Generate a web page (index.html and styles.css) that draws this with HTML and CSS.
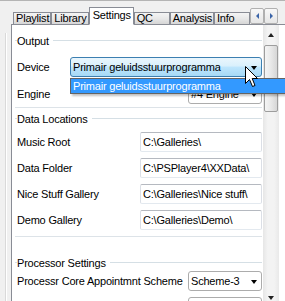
FILE: index.html
```html
<!DOCTYPE html>
<html lang="en">
<head>
    <meta charset="UTF-8">
    <title>Settings</title>
    <link rel="stylesheet" href="styles.css">
</head>
<body>
    <div class="window">
        <div class="tabbar">
            <div class="tab">Playlist</div>
            <div class="tab">Library</div>
            <div class="tab active">Settings</div>
            <div class="tab">QC</div>
            <div class="tab">Analysis</div>
            <div class="tab">Info</div>
            <div class="tab-scroll">
                <div class="tab-arrow"><span class="tri-left"></span></div>
                <div class="tab-arrow"><span class="tri-right"></span></div>
            </div>
        </div>

        <div class="pane-row">
            <div class="side"><div class="side-line"></div></div>
            <div class="panel">
                <div class="scroll-area">
                    <div class="content">
                        <div class="group-title output-title">Output</div>
                        <div class="row device-row">
                            <label>Device</label>
                            <div class="combo wide focused">Primair geluidsstuurprogramma</div>
                        </div>
                        <div class="row engine-row">
                            <label>Engine</label>
                            <div class="combo">#4 Engine</div>
                        </div>
                        <div class="sep first-sep"></div>

                        <div class="group-title data-title">Data Locations</div>
                        <div class="row">
                            <label>Music Root</label>
                            <input class="field" type="text" value="C:\Galleries\">
                        </div>
                        <div class="row">
                            <label>Data Folder</label>
                            <input class="field" type="text" value="C:\PSPlayer4\XXData\">
                        </div>
                        <div class="row">
                            <label>Nice Stuff Gallery</label>
                            <input class="field" type="text" value="C:\Galleries\Nice stuff\">
                        </div>
                        <div class="row">
                            <label>Demo Gallery</label>
                            <input class="field" type="text" value="C:\Galleries\Demo\">
                        </div>
                        <div class="sep"></div>

                        <div class="group-title proc-title">Processor Settings</div>
                        <div class="row scheme-row">
                            <label>Processr Core Appointmnt Scheme</label>
                            <div class="combo">Scheme-3</div>
                        </div>
                        <div class="row">
                            <label>Phase Primer (msec)</label>
                            <div class="combo">1</div>
                        </div>
                    </div>
                    <div class="vscroll">
                        <div class="sb-btn"><span class="tri-up"></span></div>
                        <div class="thumb"><span class="grip"></span></div>
                        <div class="track"></div>
                        <div class="sb-btn"><span class="tri-down"></span></div>
                    </div>
                </div>
            </div>
        </div>

        <div class="popup">Primair geluidsstuurprogramma</div>

        <svg class="cursor" width="14" height="22" viewBox="0 0 14 22">
            <path d="M0.5 0.5 L0.5 17.5 L4.5 13.5 L7.5 20.5 L10 19.5 L7.2 12.5 L12.5 12.5 Z" fill="#fff" stroke="#000" stroke-width="1" stroke-linejoin="miter"/>
        </svg>
    </div>
</body>
</html>
```

FILE: styles.css
```css
body {
    margin: 0;
    font-family: "Liberation Sans", Arial, sans-serif;
    font-size: 11px;
    letter-spacing: -0.2px;
    color: #000;
    background: #f0f0f0;
    overflow: hidden;
}
.window {
    position: relative;
    height: 301px;
    box-sizing: border-box;
    border-top: 1px solid #b4b4b4;
    overflow: hidden;
}

/* tabs */
.tabbar {
    display: flex;
    align-items: flex-end;
    height: 24px;
    padding-left: 13px;
    margin-bottom: -1px;
}
.tab {
    position: relative;
    z-index: 1;
    box-sizing: border-box;
    height: 13px;
    min-width: 36px;
    padding: 0 2px;
    line-height: 11px;
    border: 1px solid #898c95;
    background: linear-gradient(#f4f4f4, #e8e8e8 50%, #d6d6d6);
    white-space: nowrap;
}
.tab.active {
    height: 18px;
    padding: 2px 3px 0;
    background: #fff;
    border-bottom-color: #fff;
}
.tab-scroll {
    display: flex;
    align-self: flex-start;
    margin: 7px 7px 0 auto;
}
.tab-arrow {
    box-sizing: border-box;
    width: 14px;
    height: 16px;
    border: 1px solid #b0b0b0;
    border-radius: 2px;
    background: linear-gradient(#f8f8f8, #e6e6e6);
    display: flex;
    align-items: center;
    justify-content: center;
}
.tri-left {
    border-top: 3px solid transparent;
    border-bottom: 3px solid transparent;
    border-right: 3px solid #3b64a8;
}
.tri-right {
    border-top: 3px solid transparent;
    border-bottom: 3px solid transparent;
    border-left: 3px solid #3b64a8;
}

/* panel */
.pane-row {
    display: flex;
}
.side {
    width: 11px;
    flex: none;
}
.side-line {
    width: 0;
    height: 280px;
    margin: 9px 0 0 5px;
    border-left: 1px solid #d9d9d9;
    border-right: 1px solid #fff;
}
.panel {
    flex: none;
    width: 290px;
    border: 1px solid #898c95;
    background: #fff;
}
.scroll-area {
    display: flex;
    height: 283px;
    overflow: hidden;
}
.content {
    box-sizing: border-box;
    width: 251px;
    flex: none;
    padding-right: 1px;
}

.group-title {
    display: flex;
    align-items: center;
    height: 13px;
    line-height: 13px;
    padding-left: 3px;
    white-space: nowrap;
}
.group-title::before {
    content: "";
    width: 2px;
    height: 1px;
    margin-top: -2px;
    background: #d5dfe5;
}
.group-title::after {
    content: "";
    flex: 1;
    height: 1px;
    margin: -2px 0 0 4px;
    background: #d5dfe5;
}
.output-title { margin-top: 10px; }
.data-title { margin-top: 5px; }
.proc-title { margin-top: 20px; }

.sep {
    height: 1px;
    margin: 6px 0 0 3px;
    background: #dde3e8;
}
.first-sep { margin-top: 3px; }

.row {
    display: flex;
    align-items: center;
    height: 20px;
    margin-top: 6px;
}
.device-row { margin-top: 9px; }
.engine-row { margin-top: 7px; }
.scheme-row { margin-top: 1px; }
.row label {
    padding-left: 5px;
    white-space: nowrap;
}

.combo {
    box-sizing: border-box;
    width: 74px;
    height: 20px;
    margin-left: auto;
    padding-left: 2px;
    display: flex;
    align-items: center;
    border: 1px solid #acacac;
    border-radius: 3px;
    background: #fff;
    white-space: nowrap;
}
.combo::after {
    content: "";
    margin: 1px 4px 0 auto;
    border-left: 3.5px solid transparent;
    border-right: 3.5px solid transparent;
    border-top: 4px solid #000;
}
.combo.wide {
    width: 192px;
}
.combo.focused {
    border-color: #3c7fb1;
    background: linear-gradient(#eaf6fd, #d9f0fc 45%, #bee6fd 50%, #a7d9f5);
}
.field {
    box-sizing: border-box;
    width: 122px;
    height: 20px;
    margin: 0 0 0 auto;
    padding: 0 0 0 2px;
    font: inherit;
    letter-spacing: inherit;
    color: #000;
    border: 1px solid;
    border-color: #b5b9c0 #dbdfe6 #e3e9ef #dbdfe6;
    border-radius: 2px;
    background: #fff;
    outline: none;
}

/* scrollbar */
.vscroll {
    box-sizing: border-box;
    width: 16px;
    flex: none;
    display: flex;
    flex-direction: column;
    background: linear-gradient(to right, #e6e6e6, #f3f3f3 30%, #f3f3f3 70%, #e9e9e9);
}
.sb-btn {
    height: 20px;
    flex: none;
    display: flex;
    align-items: center;
    justify-content: center;
}
.tri-up {
    border-left: 3.5px solid transparent;
    border-right: 3.5px solid transparent;
    border-bottom: 4px solid #222;
}
.tri-down {
    border-left: 3.5px solid transparent;
    border-right: 3.5px solid transparent;
    border-top: 4px solid #222;
}
.thumb {
    box-sizing: border-box;
    height: 67px;
    margin: 0 1px;
    flex: none;
    display: flex;
    align-items: center;
    justify-content: center;
    border: 1px solid #9d9d9d;
    border-radius: 2px;
    background: linear-gradient(to right, #f5f5f5, #e8e8e8 50%, #d6d6d6);
}
.grip {
    width: 7px;
    height: 1px;
    background: #707070;
}
.track {
    flex: 1;
}

/* open dropdown */
.popup {
    position: absolute;
    left: 70px;
    top: 77px;
    width: 222px;
    height: 16px;
    box-sizing: border-box;
    padding-left: 2px;
    line-height: 14px;
    color: #fff;
    background: #3399ff;
    border: 1px solid #646464;
    box-shadow: 2px 2px 2px rgba(0,0,0,0.25);
    white-space: nowrap;
}
.cursor {
    position: absolute;
    left: 245px;
    top: 65px;
}
```
